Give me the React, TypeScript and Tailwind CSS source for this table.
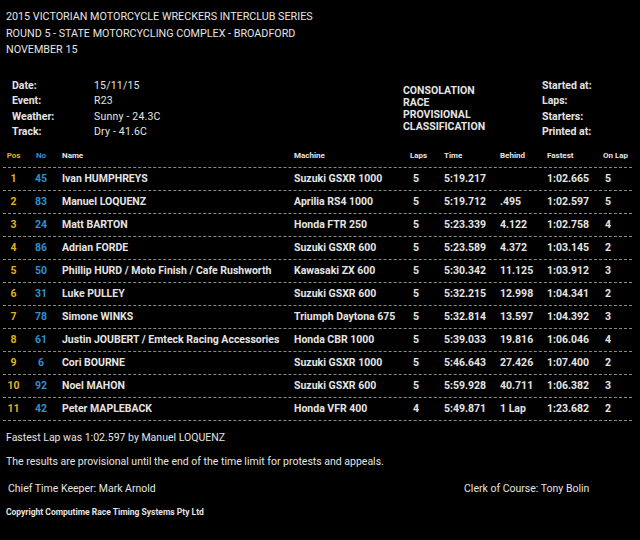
const rows = [
  { pos: 1, no: 45, name: "Ivan HUMPHREYS", machine: "Suzuki GSXR 1000", laps: 5, time: "5:19.217", behind: "", fastest: "1:02.665", onLap: 5 },
  { pos: 2, no: 83, name: "Manuel LOQUENZ", machine: "Aprilia RS4 1000", laps: 5, time: "5:19.712", behind: ".495", fastest: "1:02.597", onLap: 5 },
  { pos: 3, no: 24, name: "Matt BARTON", machine: "Honda FTR 250", laps: 5, time: "5:23.339", behind: "4.122", fastest: "1:02.758", onLap: 4 },
  { pos: 4, no: 86, name: "Adrian FORDE", machine: "Suzuki GSXR 600", laps: 5, time: "5:23.589", behind: "4.372", fastest: "1:03.145", onLap: 2 },
  { pos: 5, no: 50, name: "Phillip HURD / Moto Finish / Cafe Rushworth", machine: "Kawasaki ZX 600", laps: 5, time: "5:30.342", behind: "11.125", fastest: "1:03.912", onLap: 3 },
  { pos: 6, no: 31, name: "Luke PULLEY", machine: "Suzuki GSXR 600", laps: 5, time: "5:32.215", behind: "12.998", fastest: "1:04.341", onLap: 2 },
  { pos: 7, no: 78, name: "Simone WINKS", machine: "Triumph Daytona 675", laps: 5, time: "5:32.814", behind: "13.597", fastest: "1:04.392", onLap: 3 },
  { pos: 8, no: 61, name: "Justin JOUBERT / Emteck Racing Accessories", machine: "Honda CBR 1000", laps: 5, time: "5:39.033", behind: "19.816", fastest: "1:06.046", onLap: 4 },
  { pos: 9, no: 6, name: "Cori BOURNE", machine: "Suzuki GSXR 1000", laps: 5, time: "5:46.643", behind: "27.426", fastest: "1:07.400", onLap: 2 },
  { pos: 10, no: 92, name: "Noel MAHON", machine: "Suzuki GSXR 600", laps: 5, time: "5:59.928", behind: "40.711", fastest: "1:06.382", onLap: 3 },
  { pos: 11, no: 42, name: "Peter MAPLEBACK", machine: "Honda VFR 400", laps: 4, time: "5:49.871", behind: "1 Lap", fastest: "1:23.682", onLap: 2 },
];

const info = [
  ["Date:", "15/11/15"],
  ["Event:", "R23"],
  ["Weather:", "Sunny - 24.3C"],
  ["Track:", "Dry - 41.6C"],
];

const cols = "grid grid-cols-[21px_34px_236px_116px_34px_56px_47px_56px_1fr]";

export default function App() {
  return (
    <div className="w-[640px] h-[540px] bg-black text-[#e4e4e4] font-['Roboto',sans-serif] overflow-hidden">
      {/* Title */}
      <div className="pl-[6px] pt-[9px] text-[10.75px] leading-[16.5px]">
        <div>2015 VICTORIAN MOTORCYCLE WRECKERS INTERCLUB SERIES</div>
        <div>ROUND 5 - STATE MOTORCYCLING COMPLEX - BROADFORD</div>
        <div>NOVEMBER 15</div>
      </div>

      {/* Race info */}
      <div className="mt-[19px] flex">
        <div className="w-[403px] pl-[12px] grid grid-cols-[82px_1fr] text-[10.5px] leading-[15.5px]">
          {info.map(([k, v]) => (
            <div key={k} className="contents">
              <div className="font-bold">{k}</div>
              <div className="tracking-[0.2px]">{v}</div>
            </div>
          ))}
        </div>
        <div className="w-[139px] mt-[7px] text-[10.5px] leading-[12px] font-bold">
          <div>CONSOLATION</div>
          <div>RACE</div>
          <div>PROVISIONAL</div>
          <div>CLASSIFICATION</div>
        </div>
        <div className="text-[10.5px] leading-[15.5px] font-bold">
          <div>Started at:</div>
          <div>Laps:</div>
          <div>Starters:</div>
          <div>Printed at:</div>
        </div>
      </div>

      {/* Results table */}
      <div className="mt-[6px] mx-[3px] w-[629px]">
        <div className={`${cols} h-[22px] items-center text-[8px] font-bold border-b border-dashed border-[#8a8a8a]`}>
          <div className="text-center text-[#e0b21f]">Pos</div>
          <div className="text-center text-[#2f8fd0]">No</div>
          <div className="pl-[4px]">Name</div>
          <div>Machine</div>
          <div>Laps</div>
          <div>Time</div>
          <div>Behind</div>
          <div>Fastest</div>
          <div>On Lap</div>
        </div>
        {rows.map((r) => (
          <div
            key={r.pos}
            className={`${cols} h-[23px] items-center text-[10.5px] font-bold border-b border-dashed border-[#8a8a8a]`}
          >
            <div className="text-center text-[#e0b21f]">{r.pos}</div>
            <div className="text-center text-[#2f8fd0]">{r.no}</div>
            <div className="pl-[4px] whitespace-nowrap">{r.name}</div>
            <div className="whitespace-nowrap">{r.machine}</div>
            <div className="pl-[3px]">{r.laps}</div>
            <div>{r.time}</div>
            <div>{r.behind}</div>
            <div>{r.fastest}</div>
            <div className="pl-[2px]">{r.onLap}</div>
          </div>
        ))}
      </div>

      {/* Footer */}
      <div className="pl-[6px] text-[10.5px] leading-[16px]">
        <div className="mt-[9px]">Fastest Lap was 1:02.597 by Manuel LOQUENZ</div>
        <div className="mt-[8px]">The results are provisional until the end of the time limit for protests and appeals.</div>
        <div className="mt-[11px] flex">
          <div className="w-[458px] pl-[2px]">Chief Time Keeper: Mark Arnold</div>
          <div>Clerk of Course: Tony Bolin</div>
        </div>
        <div className="mt-[9px] text-[8.5px] leading-[12px] font-bold">Copyright Computime Race Timing Systems Pty Ltd</div>
      </div>
    </div>
  );
}
